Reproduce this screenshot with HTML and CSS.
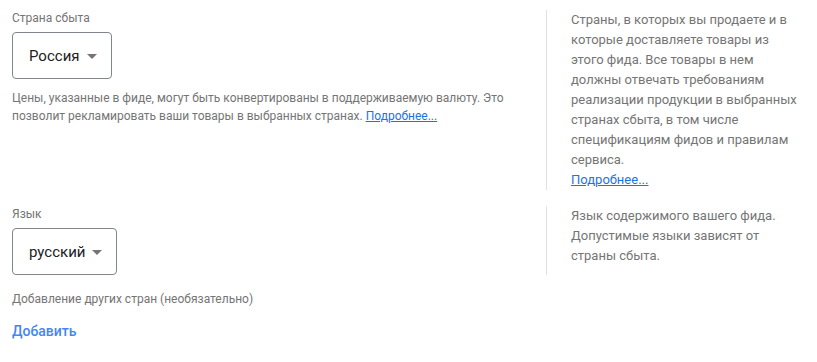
FILE: index.html
```
<!DOCTYPE html>
<html lang="ru">
<head>
<meta charset="utf-8">
<title>Настройки фида</title>
<link rel="stylesheet" href="styles.css">
</head>
<body>
<div class="page">
  <section class="row">
    <div class="main">
      <div class="label">Страна сбыта</div>
      <div class="select">
        <span class="select-value">Россия</span>
        <span class="arrow"></span>
      </div>
      <p class="hint">Цены, указанные в фиде, могут быть конвертированы в поддерживаемую валюту. Это позволит рекламировать ваши товары в выбранных странах. <a class="link" href="#">Подробнее...</a></p>
    </div>
    <aside class="aside">
      Страны, в которых вы продаете и в которые доставляете товары из этого фида. Все товары в нем должны отвечать требованиям реализации продукции в выбранных странах сбыта, в том числе спецификациям фидов и правилам сервиса.<br><a class="link" href="#">Подробнее...</a>
    </aside>
  </section>
  <section class="row row-second">
    <div class="main">
      <div class="label">Язык</div>
      <div class="select">
        <span class="select-value">русский</span>
        <span class="arrow"></span>
      </div>
    </div>
    <aside class="aside">
      Язык содержимого вашего фида. Допустимые языки зависят от страны сбыта.
    </aside>
  </section>
  <section class="extra">
    <div class="hint">Добавление других стран (необязательно)</div>
    <div class="add">Добавить</div>
  </section>
</div>
</body>
</html>
```
FILE: styles.css
```
html, body {
  margin: 0;
  padding: 0;
  background: #ffffff;
}

body {
  font-family: Roboto, "Noto Sans", Arial, sans-serif;
  color: #757575;
}

.page {
  padding: 10px 14px 0 12px;
}

.row {
  display: flex;
  gap: 24px;
  align-items: stretch;
}

.row-second {
  margin-top: 16px;
}

.main {
  flex: 1;
  min-width: 0;
}

.label {
  font-size: 12px;
  line-height: 16px;
  color: #757575;
}

.select {
  display: inline-flex;
  align-items: center;
  height: 45px;
  margin-top: 6px;
  padding: 0 14px 0 16px;
  border: 1px solid #80868b;
  border-radius: 4px;
  color: #202124;
  font-size: 15px;
}

.select-value {
  line-height: 20px;
}

.arrow {
  width: 0;
  height: 0;
  margin-left: 7px;
  margin-top: 2px;
  border-left: 5px solid transparent;
  border-right: 5px solid transparent;
  border-top: 5px solid #757575;
}

.hint {
  margin: 10px 0 0 0;
  font-size: 12px;
  line-height: 18px;
  color: #757575;
}

.link {
  color: #1a73e8;
  text-decoration: underline;
}

.aside {
  width: 232px;
  flex: none;
  border-left: 1px solid #e0e0e0;
  padding-left: 24px;
  font-size: 13px;
  line-height: 20px;
  color: #757575;
}

.extra {
  margin-top: 15px;
}

.extra .hint {
  margin-top: 0;
}

.add {
  margin-top: 13px;
  font-size: 14px;
  line-height: 20px;
  font-weight: 500;
  color: #4285f4;
}
```
